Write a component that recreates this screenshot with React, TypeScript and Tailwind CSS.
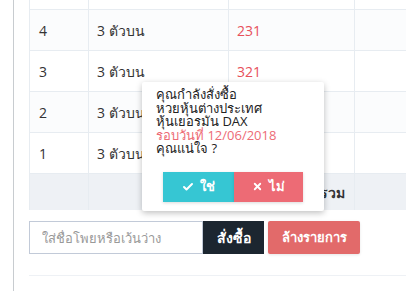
import { Check, X } from 'lucide-react'

const rows = [
  { no: 5, type: '3 ตัวบน', num: '123' },
  { no: 4, type: '3 ตัวบน', num: '231' },
  { no: 3, type: '3 ตัวบน', num: '321' },
  { no: 2, type: '3 ตัวบน', num: '312' },
  { no: 1, type: '3 ตัวบน', num: '132' },
]

export default function App() {
  return (
    <div className="relative w-[406px] h-[291px] overflow-hidden bg-white text-[14px] text-[#333] font-['Open_Sans','Noto_Sans',sans-serif]">
      <div className="flex h-full">
        <div className="w-[13px] shrink-0" />
        <div className="w-px shrink-0 bg-[#c8ccd0]" />
        <div className="pl-[15px] shrink-0">
          <div className="h-[210px] overflow-hidden">
            <div className="-mt-[31px] border-l border-[#e7ecf1] w-[520px]">
              {rows.map((r, i) => (
                <div
                  key={r.no}
                  className={`grid grid-cols-[59px_140px_126px_195px] h-[41px] border-b border-[#e7ecf1] ${i % 2 === 1 ? 'bg-[#fbfcfd]' : 'bg-white'}`}
                >
                  <div className="flex items-center pl-[9px] border-r border-[#e7ecf1]">{r.no}</div>
                  <div className="flex items-center pl-[8px] border-r border-[#e7ecf1]">{r.type}</div>
                  <div className="flex items-center pl-[8px] border-r border-[#e7ecf1] text-[#e7505a]">{r.num}</div>
                  <div />
                </div>
              ))}
              <div className="grid grid-cols-[59px_140px_126px_195px] h-[36px] bg-[#eef1f5]">
                <div className="border-r border-[#e7ecf1]" />
                <div className="border-r border-[#e7ecf1]" />
                <div className="flex items-center justify-end pr-[9px] font-bold border-r border-[#e7ecf1]">ยอดรวม</div>
                <div />
              </div>
            </div>
          </div>

          <div className="flex mt-[11px] h-[33px]">
            <input
              placeholder="ใส่ชื่อโพยหรือเว้นว่าง"
              className="w-[174px] h-full border border-[#c2cad8] px-[12px] text-[13px] placeholder:text-[#999] outline-none"
            />
            <button className="w-[61px] h-full bg-[#1c2630] text-white font-bold">สั่งซื้อ</button>
            <button className="ml-[4px] w-[92px] h-full rounded-[2px] bg-[#e26a6a] text-white text-[13px] font-bold shadow-[0_1px_3px_rgba(0,0,0,0.1)]">
              ล้างรายการ
            </button>
          </div>

          <div className="mt-[21px] h-px w-[400px] bg-[#eef1f5]" />
        </div>
      </div>

      <div className="absolute left-[142px] top-[82px] w-[182px] h-[129px] bg-white rounded-[2px] shadow-[0_2px_6px_rgba(0,0,0,0.25)] px-[14px] pt-[6px]">
        <div className="text-[13px] leading-[13.5px] text-[#222]">
          <div>คุณกำลังสั่งซื้อ</div>
          <div>หวยหุ้นต่างประเทศ</div>
          <div>หุ้นเยอรมัน DAX</div>
          <div className="text-[#ed6b75]">รอบวันที่ 12/06/2018</div>
          <div>คุณแน่ใจ ?</div>
        </div>
        <div className="flex justify-center mt-[16px]">
          <button className="flex items-center justify-center gap-[6px] w-[71px] h-[30px] bg-[#36c6d3] text-white text-[13px] font-bold shadow-[0_1px_3px_rgba(0,0,0,0.15)]">
            <Check className="w-[12px] h-[12px]" strokeWidth={4} />
            ใช่
          </button>
          <button className="flex items-center justify-center gap-[6px] w-[69px] h-[30px] bg-[#ed6b75] text-white text-[13px] font-bold shadow-[0_1px_3px_rgba(0,0,0,0.15)]">
            <X className="w-[11px] h-[11px]" strokeWidth={4} />
            ไม่
          </button>
        </div>
      </div>
    </div>
  )
}
